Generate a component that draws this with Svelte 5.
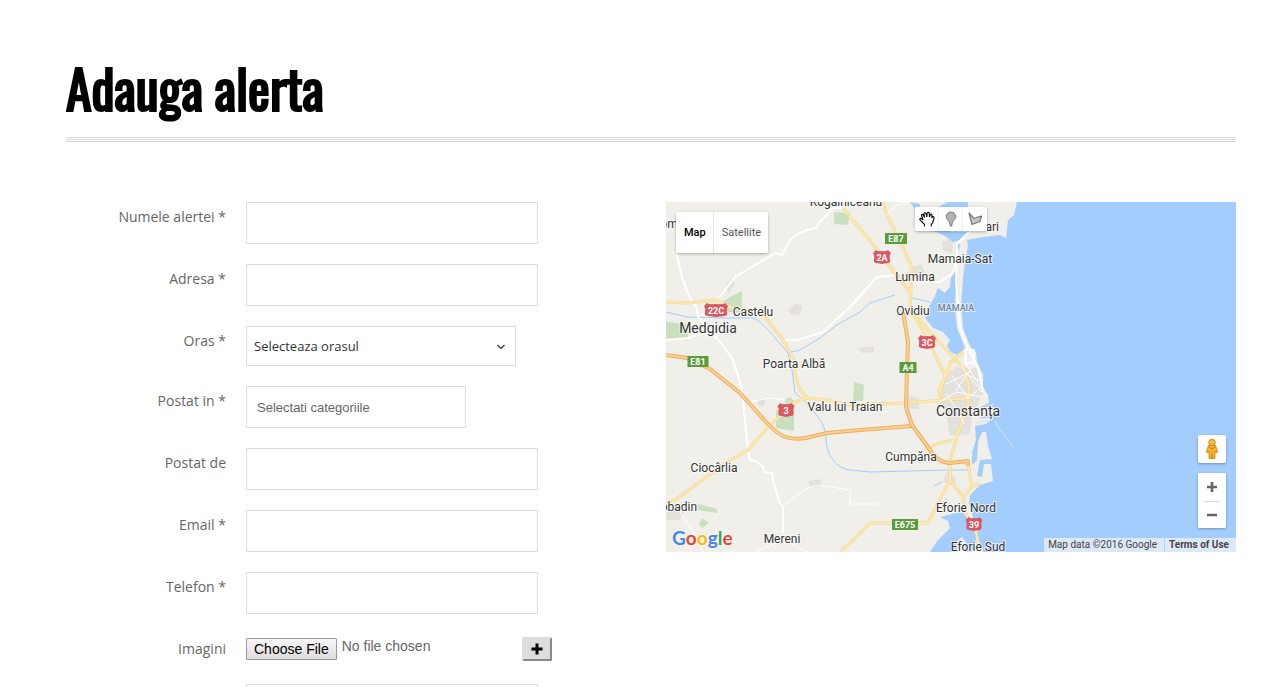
<script lang="ts">
  let mapType = $state("map");
  let tool = $state("pan");

  // contact fields shown between the category picker and the image upload
  const contactFields = [
    { id: "author", label: "Postat de", type: "text" },
    { id: "email", label: "Email *", type: "email" },
    { id: "phone", label: "Telefon *", type: "tel" },
  ];

  // Minor roads
  const streets = [
    "M11 26 11 53 16 76 24 96 31 106 32 115 54 140 66 156 72 173 76 188 82 248 84 258 90 259 97 265 98 270 106 271 107 280 111 291 113 300 117 305 117 331",
    "M49 98 56 92 69 75 109 51 116 53 124 38 133 31 141 28 150 26 154 19 161 13 166 6 177 6",
    "M117 138 131 138 157 130 184 105 211 75 231 73",
    "M246 80 274 80 287 71 291 56 291 42 302 31 312 25",
    "M0 138 22 136 48 128",
  ];

  // Village lanes and the Constanța street grid
  const lanes = [
    "M82 200 104 196 120 198",
    "M117 305 128 295 142 286 152 283 184 288 184 302 212 302",
    "M14 310 30 334 37 350",
    "M32 115 50 106",
    "M90 350 117 338 142 350",
    "M221 13 229 4 242 0",
    "M280 182 300 172 316 180",
    "M286 174 302 196 317 184",
    "M290 188 310 160 314 176",
    "M300 162 320 194",
    "M295 164 316 190",
    "M280 192 292 208 298 222",
    "M272 201 290 190 317 195",
  ];

  const coastRoads = [
    "M291 56 290 80 292 103 294 126 302 146 312 166 317 190",
    "M299 148 308 148 308 160 300 162 299 148",
  ];

  const mainRoads = [
    "M0 100 22 101 51 98 66 106 87 111 99 115 117 138 129 160 129 173 134 188 141 196 160 198 184 203 241 201 304 196",
    "M141 196 129 200 101 226 82 248 61 260 9 298 0 300",
    "M177 6 184 15 202 36 217 56 244 90",
    "M217 0 221 13 239 50 246 66 244 106 264 130 299 168 303 185 302 201 291 235 284 258 284 278 272 301 262 321 204 321 184 341 174 350",
    "M244 106 262 138 279 173 272 200",
    "M299 148 285 160 272 190",
    "M284 168 277 178",
    "M284 278 297 295 299 311 309 325 314 350",
    "M302 261 306 285 297 295",
    "M306 285 313 281",
    "M259 248 270 242 287 238",
  ];

  const motorways = [
    "M0 153 21 156 44 167 74 191 101 221C113 234 122 239 140 236L161 231 194 228 246 224",
    "M237 110 242 140 241 168 240 205 246 223 264 248Q272 261 284 261L302 259 302 264",
  ];

  const canals = [
    "M0 110 21 115 61 116 87 116Q92 117 104 130L122 151 126 168 129 191 141 201 152 215Q159 222 160 237C161 258 174 267 184 268L204 270 281 268 304 268",
    "M122 151 134 148 154 136 171 123 194 110 204 101 229 93",
    "M246 96 264 100",
    "M268 284 276 280",
  ];

  const parks = [
    "M0 120 22 122 22 136 0 137Z",
    "M62 96 76 89 76 111 62 110 55 101Z",
    "M168 10 184 11 182 23 168 22Z",
    "M110 208 128 206 128 229 110 226Z",
    "M118 198 124 195 129 200 122 205Z",
    "M188 180 198 183 197 199 187 199Z",
    "M32 302 51 307 51 311 32 308Z",
    "M36 316 43 321 36 326 33 322Z",
  ];

  const townAreas = [
    "M60 84 66 76 69 82 62 92Z",
    "M122 108 130 101 136 104 134 112 126 113Z",
    "M192 146 208 144 208 150 196 151Z",
    "M244 66 256 62 260 76 244 78Z",
    "M276 178 290 165 312 166 318 190 306 214 304 232 284 234 280 210 272 198Z",
    "M280 270 290 276 288 284 277 280Z",
    "M276 40 288 36 286 52 277 48Z",
    "M0 308 18 310 14 318 0 318Z",
    "M142 279 154 277 156 284 144 285Z",
    "M240 192 253 196 253 207 240 207Z",
    "M92 198 100 196 98 204 92 203Z",
  ];

  const places = [
    { name: "Kogălniceanu", x: 180, y: 4 },
    { name: "om", x: 3, y: 26 },
    { name: "Năvodari", x: 309, y: 29 },
    { name: "Mamaia-Sat", x: 294, y: 61 },
    { name: "Lumina", x: 249, y: 79 },
    { name: "Ovidiu", x: 247, y: 113 },
    { name: "Castelu", x: 87, y: 114 },
    { name: "Medgidia", x: 42, y: 131, big: true },
    { name: "Poarta Albă", x: 128, y: 166 },
    { name: "Valu lui Traian", x: 179, y: 209 },
    { name: "Constanța", x: 302, y: 214, big: true },
    { name: "Cumpăna", x: 245, y: 259 },
    { name: "Ciocârlia", x: 48, y: 270 },
    { name: "Cobadin", x: 9, y: 309 },
    { name: "Eforie Nord", x: 300, y: 310 },
    { name: "Mereni", x: 116, y: 341 },
    { name: "Eforie Sud", x: 312, y: 349 },
  ];

  const greenSigns = [
    { name: "E87", x: 230, y: 36, w: 22 },
    { name: "E81", x: 32, y: 159, w: 21 },
    { name: "A4", x: 242, y: 165, w: 17 },
    { name: "E675", x: 239, y: 322, w: 26 },
  ];

  const redSigns = [
    { name: "2A", x: 216, y: 55, w: 16 },
    { name: "22C", x: 50, y: 108, w: 22 },
    { name: "3C", x: 261, y: 140, w: 16 },
    { name: "3", x: 120, y: 208, w: 15 },
    { name: "39", x: 308, y: 322, w: 15 },
  ];

  function shieldPath(x: number, y: number, w: number): string {
    const l = x - w / 2;
    const r = x + w / 2;
    return `M${l + 2} ${y - 7}Q${l + 4} ${y - 5} ${x} ${y - 6}Q${r - 4} ${y - 5} ${r - 2} ${y - 7}L${r + 1} ${y - 4}Q${r - 1} ${y - 1} ${r} ${y + 2}Q${r + 1} ${y + 6} ${r - 3} ${y + 6}L${x} ${y + 7} ${l + 3} ${y + 6}Q${l - 1} ${y + 6} ${l} ${y + 2}Q${l + 1} ${y - 1} ${l - 1} ${y - 4}Z`;
  }
</script>

<main class="page">
  <h1>Adauga alerta</h1>

  <div class="columns">
    <form class="alert-form" onsubmit={(e) => e.preventDefault()}>
      <div class="row">
        <label for="name">Numele alertei *</label>
        <input id="name" class="field" type="text" />
      </div>
      <div class="row">
        <label for="address">Adresa *</label>
        <input id="address" class="field" type="text" />
      </div>
      <div class="row">
        <label for="city">Oras *</label>
        <div class="select-wrap">
          <select id="city">
            <option>Selecteaza orasul</option>
            <option>Constanța</option>
            <option>Medgidia</option>
          </select>
          <svg class="chevron" viewBox="0 0 10 6" aria-hidden="true">
            <path d="M1.5 1 5 4.5 8.5 1" fill="none" stroke="#444" stroke-width="1.5" />
          </svg>
        </div>
      </div>
      <div class="row">
        <label for="categories">Postat in *</label>
        <input id="categories" class="field categories" type="text" placeholder="Selectati categoriile" />
      </div>
      {#each contactFields as field}
        <div class="row">
          <label for={field.id}>{field.label}</label>
          <input id={field.id} class="field" type={field.type} />
        </div>
      {/each}
      <div class="row">
        <label for="images">Imagini</label>
        <div class="upload">
          <input id="images" type="file" />
          <button type="button" class="add-btn" aria-label="Adauga imagine">
            <svg viewBox="0 0 12 12" aria-hidden="true">
              <path d="M6 0.5V11.5M0.5 6H11.5" stroke="#000" stroke-width="3" />
            </svg>
          </button>
        </div>
      </div>
      <div class="row">
        <span></span>
        <textarea class="field" aria-label="Descriere"></textarea>
      </div>
    </form>

    <section class="map" aria-label="Map">
      <svg class="map-canvas" viewBox="0 0 570 350" preserveAspectRatio="xMidYMid slice">
        <rect width="570" height="350" fill="#f0efea" />
        {#each townAreas as d}
          <path {d} fill="#e4e1dc" />
        {/each}
        {#each parks as d}
          <path {d} fill="#cadfc0" />
        {/each}

        <!-- Black Sea -->
        <path
          class="water"
          d="M351 0 348 13 342 18 340 36 334 33 317 35 301 38 302 43 299 60 297 76 295 103 297 126 304 144 310 151 311 160 317 173 317 185 322 193 323 201 312 206 326 204 332 209 312 217 328 215 320 222 309 224 310 238 306 250 306 263 311 258 312 240 316 230 320 230 322 244 326 257 314 258 311 274 316 275 318 262 325 262 327 279 314 283 304 293 303 301 307 315 312 335 317 350H570V0Z"
        />
        <!-- lagoons behind the coast -->
        <path
          class="water"
          d="M291 40 293 50 290 68 285 76 284 85 279 91 272 86 268 96 262 106 264 110 259 116 267 126 277 130 284 138 281 144 286 151 292 153 299 146 291 126 289 106 290 80 292 56 294 42Z"
        />
        <path class="water" d="M244 0 254 2 253 8 270 6 282 0H302V8L296 14 302 20 318 22 312 28 301 31 294 38 287 40 279 34 270 30 252 27 260 20 250 9Z" />
        <path class="water" d="M294 310 302 312 304 320 311 335 306 350H299L300 340 296 335 290 340 292 350H264L272 338 284 326 282 319 274 315Z" />
        <path class="pier" d="M329 218 333 227 342 238 349 247" />
        <path class="pier" d="M312 208 328 202M311 215 330 212M310 221 327 217" />

        {#each canals as d}
          <path {d} class="canal" />
        {/each}
        {#each streets as d}
          <path {d} class="street" />
        {/each}
        {#each mainRoads as d}
          <path {d} class="road-edge" />
        {/each}
        {#each mainRoads as d}
          <path {d} class="road" />
        {/each}
        {#each coastRoads as d}
          <path {d} class="street" />
        {/each}
        {#each lanes as d}
          <path {d} class="lane" />
        {/each}
        {#each motorways as d}
          <path {d} class="motorway-edge" />
          <path {d} class="motorway" />
        {/each}

        {#each greenSigns as sign}
          <rect x={sign.x - sign.w / 2} y={sign.y - 5} width={sign.w} height="11" fill="#5a9c3c" />
          <text x={sign.x} y={sign.y + 4} class="sign">{sign.name}</text>
        {/each}
        {#each redSigns as sign}
          <path d={shieldPath(sign.x, sign.y, sign.w)} fill="#dc5860" />
          <text x={sign.x} y={sign.y + 4} class="sign">{sign.name}</text>
        {/each}
        {#each places as place}
          <text x={place.x} y={place.y} class="place" class:big={place.big}>{place.name}</text>
        {/each}
        <text x="290" y="109" class="resort">MAMAIA</text>
      </svg>

      <div class="map-types">
        <button type="button" class:active={mapType === "map"} onclick={() => (mapType = "map")}>Map</button>
        <button type="button" class:active={mapType === "satellite"} onclick={() => (mapType = "satellite")}>Satellite</button>
      </div>

      <div class="draw-tools">
        <button type="button" aria-label="Stop drawing" aria-pressed={tool === "pan"} onclick={() => (tool = "pan")}>
          <svg viewBox="0 0 16 16">
            <path
              d="M5.5 15.5V13.5L2.5 10.5 0.8 8.5Q0.8 7 2.5 7.5L4 9 2.5 4.5Q2.5 3 4 3.5L5.5 6.5 5 2.5Q5.8 1 7 2.5L7.8 6 8.2 1.8Q9.5 0.5 10.2 2L10.5 6 11.5 3.2Q13 2.5 13 4.5L12.8 7 13.5 5.8Q15.2 5.2 15 7.5L13.8 11.5 12.3 13.5V15.5"
              fill="#fff"
              stroke="#000"
              stroke-width="1.1"
            />
          </svg>
        </button>
        <button type="button" aria-label="Add a marker" aria-pressed={tool === "marker"} onclick={() => (tool = "marker")}>
          <svg viewBox="0 0 16 16">
            <path d="M8 1A4.8 4.8 0 0 1 12.8 5.8C12.8 8.5 9 9.5 8.8 15H7.2C7 9.5 3.2 8.5 3.2 5.8A4.8 4.8 0 0 1 8 1Z" fill="#b3b3b3" stroke="#777" />
          </svg>
        </button>
        <button type="button" aria-label="Draw a shape" aria-pressed={tool === "shape"} onclick={() => (tool = "shape")}>
          <svg viewBox="0 0 16 16">
            <path d="M2 2 7 7.3 14.5 5 13 10.5 5 13.5Z" fill="#c4c4c4" stroke="#777" stroke-width="1.2" stroke-linejoin="round" />
          </svg>
        </button>
      </div>

      <div class="map-controls">
        <button type="button" class="pegman" aria-label="Street View">
          <svg viewBox="0 0 14 22">
            <path d="M3.5 7.5H10.5L12.8 14 11 14.8 10 13V20.5H4V13L3 14.8 1.2 14Z" fill="#fbb31a" stroke="#b9812b" stroke-width="0.8" />
            <path d="M4 9 7 11 10 9M7 15V20" fill="none" stroke="#c8742b" />
            <circle cx="7" cy="4.5" r="3.3" fill="#fbb92b" stroke="#b9812b" stroke-width="0.8" />
          </svg>
        </button>
        <div class="zoom">
          <button type="button" aria-label="Zoom in">
            <svg viewBox="0 0 12 12"><path d="M6 1V11M1 6H11" stroke="#666" stroke-width="2.6" /></svg>
          </button>
          <button type="button" aria-label="Zoom out">
            <svg viewBox="0 0 12 12"><path d="M1 6H11" stroke="#666" stroke-width="2.6" /></svg>
          </button>
        </div>
      </div>

      <a class="google" href="#google" aria-label="Google">
        <span class="blue">G</span><span class="red">o</span><span class="yellow">o</span><span class="blue">g</span><span class="green">l</span><span class="red">e</span>
      </a>

      <div class="attribution">
        <span>Map data ©2016 Google</span>
        <a href="#terms">Terms of Use</a>
      </div>
    </section>
  </div>
</main>

<style>
  :global(html) {
    scrollbar-width: none;
  }

  :global(body) {
    background: #fff;
    color: #555;
    font-family: "Open Sans", sans-serif;
    font-size: 14px;
  }

  .page {
    padding: 51px 25px 0 66px;
  }

  h1 {
    margin: 0 0 60px;
    color: #000;
    font-family: "Oswald", "Liberation Sans Narrow", sans-serif;
    font-size: 52px;
    font-weight: 400;
    line-height: 74px;
    -webkit-text-stroke: 2px #000;
  }

  /* triple hairline under the title */
  h1::after {
    content: "";
    display: block;
    height: 5px;
    margin-top: 12px;
    background: repeating-linear-gradient(#d8d8d8 0 1px, #fff 1px 2px);
  }

  .columns {
    display: grid;
    grid-template-columns: 1fr 1fr;
    gap: 30px;
    align-items: start;
  }

  .alert-form {
    display: grid;
    gap: 20px;
  }

  .row {
    display: grid;
    grid-template-columns: 160px 1fr;
    column-gap: 20px;
    align-items: start;
  }

  label {
    line-height: 20px;
    padding-top: 5px;
    text-align: right;
    color: #666;
  }

  .field {
    box-sizing: border-box;
    width: 292px;
    height: 42px;
    padding: 0 10px;
    border: 1px solid #ddd;
    border-radius: 0;
    background: #fff;
    color: #555;
    font-family: "Liberation Sans", Arial, sans-serif;
    font-size: 13px;
  }

  .field::placeholder {
    color: #666;
  }

  .categories {
    width: 220px;
  }

  .select-wrap {
    position: relative;
    width: 270px;
  }

  select {
    display: block;
    appearance: none;
    width: 100%;
    height: 40px;
    padding: 0 30px 0 7px;
    border: 1px solid #ddd;
    border-radius: 0;
    background: #fff;
    color: #333;
    font-family: "Open Sans", sans-serif;
    font-size: 13px;
    font-weight: 500;
  }

  .chevron {
    position: absolute;
    right: 10px;
    top: 18px;
    width: 10px;
    height: 6px;
    pointer-events: none;
  }

  .upload {
    display: flex;
    align-items: center;
    justify-content: space-between;
    width: 306px;
    height: 30px;
  }

  input[type="file"] {
    width: 240px;
    height: 22px;
    color: #666;
    font-family: "Liberation Sans", Arial, sans-serif;
    font-size: 14px;
  }

  input[type="file"]::file-selector-button {
    height: 22px;
    margin: 0 5px 0 0;
    padding: 0 7px;
    border: 1px solid #999;
    border-radius: 1px;
    background: linear-gradient(#f6f6f6, #ddd);
    color: #000;
    font: inherit;
    vertical-align: top;
  }

  .add-btn {
    display: grid;
    place-items: center;
    width: 30px;
    height: 24px;
    padding: 0;
    border: 2px outset #ddd;
    border-radius: 2px;
    background: #ddd;
  }

  .add-btn svg {
    width: 12px;
    height: 12px;
  }

  textarea.field {
    height: 120px;
    resize: none;
  }

  /* Map */
  .map {
    position: relative;
    height: 350px;
    overflow: hidden;
    font-family: Roboto, sans-serif;
  }

  .map-canvas {
    display: block;
    width: 100%;
    height: 100%;
  }

  .map-canvas path {
    stroke-linejoin: round;
  }

  .water {
    fill: #a3ccff;
  }

  .canal,
  .street,
  .lane,
  .road,
  .road-edge,
  .motorway,
  .motorway-edge,
  .pier {
    fill: none;
  }

  .canal {
    stroke: #a3ccff;
    stroke-width: 1px;
  }

  .street {
    stroke: #fff;
    stroke-width: 2px;
  }

  .lane {
    stroke: #fff;
    stroke-width: 1px;
  }

  .pier {
    stroke: #d5e3ee;
    stroke-width: 1px;
  }

  .road-edge {
    stroke: #ecd49c;
    stroke-width: 3px;
  }

  .road {
    stroke: #ffe9a5;
    stroke-width: 2px;
  }

  .motorway-edge {
    stroke: #e9ae68;
    stroke-width: 4px;
  }

  .motorway {
    stroke: #ffcf88;
    stroke-width: 2px;
  }

  .place,
  .resort,
  .sign {
    font-family: Roboto, sans-serif;
    text-anchor: middle;
  }

  .place {
    font-size: 12px;
    fill: #333;
    stroke: rgba(255, 255, 255, 0.7);
    stroke-width: 2px;
    paint-order: stroke;
  }

  .place.big {
    font-size: 14px;
  }

  .resort {
    font-size: 9px;
    font-weight: 500;
    fill: #75869a;
    stroke: rgba(255, 255, 255, 0.6);
    stroke-width: 2px;
    paint-order: stroke;
  }

  .sign {
    font-size: 9px;
    font-weight: 700;
    fill: #fff;
  }

  .map button {
    padding: 0;
    border: 0;
    background: #fff;
    cursor: pointer;
  }

  .map-types,
  .draw-tools,
  .pegman,
  .zoom {
    background: #fff;
    border-radius: 2px;
    box-shadow: 0 1px 3px rgba(0, 0, 0, 0.3);
    overflow: hidden;
  }

  .map-types {
    position: absolute;
    left: 10px;
    top: 10px;
    display: flex;
    height: 41px;
  }

  .map .map-types button {
    padding: 0 7px 0 8px;
    color: #565656;
    font-family: Roboto, sans-serif;
    font-size: 11px;
  }

  .map .map-types button.active {
    color: #000;
    font-weight: 500;
  }

  .map .map-types button + button {
    border-left: 1px solid #e6e6e6;
  }

  .draw-tools {
    position: absolute;
    left: 249px;
    top: 5px;
    display: flex;
  }

  .draw-tools button {
    display: grid;
    place-items: center;
    width: 24px;
    height: 24px;
  }

  .draw-tools button:not(:last-child) {
    box-shadow: inset -1px 0 #eee;
  }

  .draw-tools svg {
    width: 16px;
    height: 16px;
  }

  .map-controls {
    position: absolute;
    right: 10px;
    bottom: 24px;
    display: grid;
    gap: 10px;
  }

  .map-controls button {
    display: grid;
    place-items: center;
    width: 28px;
    height: 28px;
  }

  .map-controls .pegman svg {
    width: 14px;
    height: 22px;
  }

  .zoom {
    height: 55px;
  }

  .map .zoom button:last-child {
    height: 27px;
    background: linear-gradient(#e0e0e0, #e0e0e0) center top / 18px 1px no-repeat #fff;
  }

  .zoom svg {
    width: 12px;
    height: 12px;
  }

  .google {
    position: absolute;
    left: 6px;
    bottom: 2px;
    display: flex;
    font-family: Lato, sans-serif;
    font-size: 19px;
    font-weight: 700;
    line-height: 24px;
    text-decoration: none;
    text-shadow: 0 0 2px #fff;
  }

  .blue {
    color: #4285f4;
  }

  .red {
    color: #ea4335;
  }

  .yellow {
    color: #fbbc05;
  }

  .green {
    color: #34a853;
  }

  .attribution {
    position: absolute;
    right: 0;
    bottom: 0;
    display: flex;
    height: 14px;
    font-size: 10px;
    line-height: 14px;
    color: #444;
  }

  .attribution span,
  .attribution a {
    padding: 0 7px 0 4px;
    background: rgba(245, 245, 245, 0.7);
  }

  .attribution a {
    border-left: 1px solid #b9d2ef;
    color: #444;
    font-weight: 700;
    text-decoration: none;
  }

  @media (max-width: 900px) {
    .page {
      padding: 32px 16px;
    }

    .columns {
      grid-template-columns: 1fr;
    }
  }
</style>
